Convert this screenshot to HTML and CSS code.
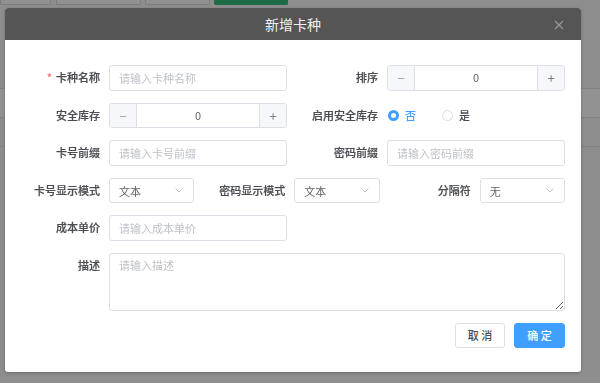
FILE: index.html
```html
<!DOCTYPE html>
<html lang="zh-CN">
<head>
  <meta charset="UTF-8" />
  <title>新增卡种</title>
  <link rel="stylesheet" href="styles.css">
</head>
<body>

  <div class="page">
    <div class="toolbar">
      <span class="tool-btn w50"></span>
      <span class="tool-btn w84"></span>
      <span class="tool-btn w64"></span>
      <span class="tool-btn green w72"></span>
    </div>
    <div class="table">
      <div class="table-row"></div>
      <div class="table-row light"></div>
      <div class="table-row"></div>
    </div>
  </div>

  <div class="mask">
    <div class="dialog">
      <div class="dialog-header">
        <span class="dialog-title">新增卡种</span>
        <button class="dialog-close" aria-label="关闭">
          <svg width="10" height="10" viewBox="0 0 10 10">
            <path d="M1 1 L9 9 M9 1 L1 9" stroke="#9a9a9a" stroke-width="1.1" fill="none"/>
          </svg>
        </button>
      </div>

      <div class="dialog-body">
        <div class="form-row cols-2">
          <div class="form-item">
            <label class="form-label"><span class="required">*</span>卡种名称</label>
            <div class="form-content">
              <input class="input" type="text" placeholder="请输入卡种名称">
            </div>
          </div>
          <div class="form-item">
            <label class="form-label">排序</label>
            <div class="form-content">
              <div class="number-input">
                <span class="num-btn minus">&minus;</span>
                <span class="num-value">0</span>
                <span class="num-btn plus">+</span>
              </div>
            </div>
          </div>
        </div>

        <div class="form-row cols-2">
          <div class="form-item">
            <label class="form-label">安全库存</label>
            <div class="form-content">
              <div class="number-input">
                <span class="num-btn minus">&minus;</span>
                <span class="num-value">0</span>
                <span class="num-btn plus">+</span>
              </div>
            </div>
          </div>
          <div class="form-item">
            <label class="form-label">启用安全库存</label>
            <div class="form-content radios">
              <span class="radio checked"><span class="radio-dot"></span>否</span>
              <span class="radio"><span class="radio-dot"></span>是</span>
            </div>
          </div>
        </div>

        <div class="form-row cols-2">
          <div class="form-item">
            <label class="form-label">卡号前缀</label>
            <div class="form-content">
              <input class="input" type="text" placeholder="请输入卡号前缀">
            </div>
          </div>
          <div class="form-item">
            <label class="form-label">密码前缀</label>
            <div class="form-content">
              <input class="input" type="text" placeholder="请输入密码前缀">
            </div>
          </div>
        </div>

        <div class="form-row cols-3">
          <div class="form-item">
            <label class="form-label">卡号显示模式</label>
            <div class="form-content">
              <div class="select"><span>文本</span>
                <svg width="8" height="5" viewBox="0 0 8 5"><path d="M0.5 0.5 L4 4 L7.5 0.5" stroke="#c0c4cc" fill="none"/></svg>
              </div>
            </div>
          </div>
          <div class="form-item">
            <label class="form-label">密码显示模式</label>
            <div class="form-content">
              <div class="select"><span>文本</span>
                <svg width="8" height="5" viewBox="0 0 8 5"><path d="M0.5 0.5 L4 4 L7.5 0.5" stroke="#c0c4cc" fill="none"/></svg>
              </div>
            </div>
          </div>
          <div class="form-item">
            <label class="form-label">分隔符</label>
            <div class="form-content">
              <div class="select"><span>无</span>
                <svg width="8" height="5" viewBox="0 0 8 5"><path d="M0.5 0.5 L4 4 L7.5 0.5" stroke="#c0c4cc" fill="none"/></svg>
              </div>
            </div>
          </div>
        </div>

        <div class="form-row cols-2">
          <div class="form-item">
            <label class="form-label">成本单价</label>
            <div class="form-content">
              <input class="input" type="text" placeholder="请输入成本单价">
            </div>
          </div>
        </div>

        <div class="form-row">
          <div class="form-item">
            <label class="form-label">描述</label>
            <div class="form-content">
              <textarea class="textarea" placeholder="请输入描述"></textarea>
            </div>
          </div>
        </div>

        <div class="dialog-footer">
          <button class="btn">取 消</button>
          <button class="btn primary">确 定</button>
        </div>
      </div>
    </div>
  </div>

</body>
</html>
```

FILE: styles.css
```css
html, body {
  height: 100%;
  margin: 0;
  padding: 0;
}
body {
  background: #8d8d8d;
  font-family: "Noto Sans CJK SC", "Noto Sans", sans-serif;
  overflow: hidden;
}
.page {
  height: 100%;
}
.toolbar {
  display: flex;
  gap: 4px;
  height: 5px;
}
.tool-btn {
  display: block;
  height: 4px;
  border: 1px solid #7c7c7c;
  border-top: none;
  border-radius: 0 0 2px 2px;
  background: #909090;
}
.tool-btn.w50 { width: 49px; }
.tool-btn.w84 { width: 83px; margin-left: 1px; }
.tool-btn.w64 { width: 63px; }
.tool-btn.green {
  width: 72px;
  background: #1f6a47;
  border-color: #1f6a47;
}
.table {
  margin-top: 55px;
}
.table-row {
  height: 28px;
  border-bottom: 1px solid #828282;
}
.table-row.light {
  background: #929292;
}
.mask {
  position: fixed;
  top: 0;
  left: 0;
  width: 100%;
  height: 100%;
}
.dialog {
  margin: 8px 0 0 5px;
  width: 576px;
  background: #fff;
  border-radius: 3px;
  box-shadow: 0 1px 3px rgba(0,0,0,0.25);
  overflow: hidden;
}
.dialog-header {
  position: relative;
  height: 32px;
  background: #555;
  display: flex;
  justify-content: center;
  align-items: center;
}
.dialog-title {
  color: #f0f0f0;
  font-size: 14px;
}
.dialog-close {
  position: absolute;
  right: 17px;
  top: 12px;
  padding: 0;
  border: none;
  background: none;
  line-height: 0;
}
.dialog-body {
  padding: 25px 16px 24px 16px;
}
.form-row {
  display: grid;
  grid-template-columns: 1fr;
  column-gap: 12px;
  margin-bottom: 12px;
}
.form-row.cols-2 {
  grid-template-columns: 1fr 1fr;
}
.form-row.cols-3 {
  grid-template-columns: 1fr 1fr 1fr;
}
.form-item {
  display: flex;
  align-items: flex-start;
}
.form-label {
  flex: 0 0 88px;
  box-sizing: border-box;
  padding-right: 9px;
  text-align: right;
  font-size: 11px;
  line-height: 25.6px;
  color: #4a4c51;
  font-weight: 500;
  -webkit-text-stroke: 0.2px #4a4c51;
}
.required {
  color: #f56c6c;
  margin-right: 4px;
  -webkit-text-stroke: 0;
}
.form-content {
  flex: 1;
  min-width: 0;
}
.input,
.select,
.number-input,
.textarea {
  box-sizing: border-box;
  width: 100%;
  height: 25.6px;
  border: 1px solid #dcdfe6;
  border-radius: 3px;
  background: #fff;
  font-family: inherit;
  font-size: 11px;
  color: #606266;
}
.input {
  display: block;
  padding: 0 9px;
  outline: none;
}
.input::placeholder,
.textarea::placeholder {
  color: #bfc2c9;
}
.number-input {
  display: flex;
  overflow: hidden;
}
.num-btn {
  flex: 0 0 26px;
  background: #f5f7fa;
  color: #7d8087;
  text-align: center;
  line-height: 23.6px;
  font-size: 13px;
}
.num-btn.minus {
  border-right: 1px solid #dcdfe6;
  color: #a0a3aa;
}
.num-btn.plus {
  border-left: 1px solid #dcdfe6;
}
.num-value {
  flex: 1;
  text-align: center;
  line-height: 23.6px;
}
.radios {
  display: flex;
  align-items: center;
  height: 25.6px;
  gap: 26px;
  padding-left: 1px;
}
.radio {
  display: flex;
  align-items: center;
  font-size: 11px;
  color: #4a4c51;
  font-weight: 500;
}
.radio-dot {
  box-sizing: border-box;
  width: 11px;
  height: 11px;
  border-radius: 50%;
  border: 1px solid #dcdfe6;
  background: #fff;
  margin-right: 6px;
}
.radio.checked {
  color: #409eff;
}
.radio.checked .radio-dot {
  border: 3.5px solid #409eff;
}
.select {
  display: flex;
  justify-content: space-between;
  align-items: center;
  padding: 0 10px 0 9px;
}
.textarea {
  display: block;
  height: 58px;
  padding: 3px 9px;
  resize: vertical;
  outline: none;
}
.dialog-footer {
  display: flex;
  justify-content: flex-end;
  gap: 9px;
}
.btn {
  box-sizing: border-box;
  width: 50px;
  height: 25px;
  border: 1px solid #dcdfe6;
  border-radius: 3px;
  background: #fff;
  color: #4a4c51;
  font-family: inherit;
  font-size: 11px;
  font-weight: 500;
  padding: 0;
  cursor: pointer;
}
.btn.primary {
  width: 51px;
  background: #409eff;
  border-color: #409eff;
  color: #fff;
}
```
